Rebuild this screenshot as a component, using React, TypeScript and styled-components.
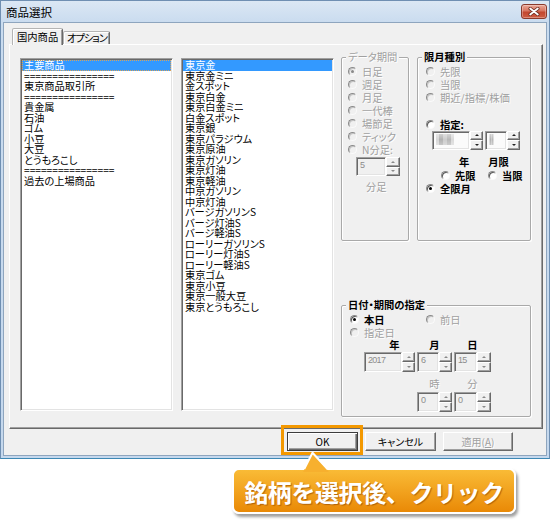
import React from "react";
import styled, { createGlobalStyle } from "styled-components";

const FONT = `"Noto Sans CJK JP", "Noto Sans", sans-serif`;

const GlobalStyle = createGlobalStyle`
  html, body { margin: 0; padding: 0; background: #ffffff; }
  body {
    width: 550px; height: 525px; overflow: hidden;
    font-family: ${FONT};
    font-feature-settings: "palt";
  }
  *, *::before, *::after { box-sizing: border-box; }
`;

const Page = styled.div`
  width: 550px;
  height: 525px;
  background: #fff;
  display: flex;
  flex-direction: column;
`;

/* ---------- window frame ---------- */

const Window = styled.div`
  width: 550px;
  height: 459px;
  display: flex;
  flex-direction: column;
  padding: 0 2px 2px 2px;
  border: 1px solid #6f8fb2;
  border-bottom-color: #3d88b4;
  background: linear-gradient(#dbe7f4, #cadcef 21px, #c5d8ed);
`;

const TitleBar = styled.div`
  height: 21px;
  flex: none;
  display: flex;
  align-items: center;
  justify-content: space-between;
  padding: 0 0 0 3px;
`;

const Title = styled.span`
  font-size: 11.5px;
  line-height: 14px;
  color: #000;
`;

const CloseButton = styled.div`
  width: 26px;
  height: 15px;
  border-radius: 3px;
  border: 1px solid #8a3a2c;
  background: linear-gradient(#eaa898, #d77560 45%, #c3472f 55%, #cf5d43);
  box-shadow: inset 0 0 0 1px rgba(255, 255, 255, 0.3);
  display: flex;
  align-items: center;
  justify-content: center;
`;

const Client = styled.div`
  flex: 1;
  display: flex;
  flex-direction: column;
  background: #f0f0f0;
  border: 1px solid #8ea5be;
`;

/* ---------- tabs ---------- */

const TabStrip = styled.div`
  height: 21px;
  flex: none;
  display: flex;
  align-items: flex-end;
  padding-left: 8px;
  position: relative;
  z-index: 1;
`;

const Tab = styled.div<{ $active?: boolean; $w: number; $tight?: boolean }>`
  width: ${(p) => p.$w}px;
  height: ${(p) => (p.$active ? 17 : 13)}px;
  margin-bottom: ${(p) => (p.$active ? -1 : 0)}px;
  background: #f0f0f0;
  border: 1px solid;
  border-bottom: none;
  border-color: #b4b4b4 #696969 transparent #b4b4b4;
  box-shadow: inset 1px 1px 0 #ffffff, inset -1px 0 0 #a0a0a0;
  border-radius: 2px 2px 0 0;
  font-size: 10.3px;
  line-height: ${(p) => (p.$active ? 15 : 12)}px;
  padding-left: ${(p) => (p.$active ? 4 : 3)}px;
  letter-spacing: ${(p) => (p.$tight ? -1.1 : 0)}px;
  white-space: nowrap;
  color: #000;
`;

const TabPanel = styled.div`
  margin-left: 5px;
  width: 534px;
  height: 385px;
  flex: none;
  border: 1px solid;
  border-color: #ffffff #696969 #696969 #ffffff;
  box-shadow: inset -1px -1px 0 #a0a0a0;
  padding: 13px 0 0 10px;
  display: grid;
  grid-template-columns: 153px 153px 190px;
  column-gap: 8px;
  align-items: start;
`;

/* ---------- list boxes ---------- */

const ListBox = styled.div`
  height: 353px;
  background: #ffffff;
  border: 1px solid;
  border-color: #a0a0a0 #ffffff #ffffff #a0a0a0;
  box-shadow: inset 1px 1px 0 #696969, inset -1px -1px 0 #e3e3e3;
  padding: 1px;
  display: flex;
  flex-direction: column;
  overflow: hidden;
`;

const ListItem = styled.div<{ $selected?: boolean; $focused?: boolean }>`
  flex: none;
  height: 10.5px;
  line-height: 10.5px;
  font-size: 10.2px;
  padding-left: 2px;
  white-space: nowrap;
  color: ${(p) => (p.$selected ? "#ffffff" : "#000000")};
  background: ${(p) => (p.$selected ? "#3399ff" : "transparent")};
  outline: ${(p) => (p.$focused ? "1px dotted #d9a35a" : "none")};
  outline-offset: -1px;
`;

/* ---------- group boxes ---------- */

const RightColumn = styled.div`
  display: flex;
  flex-direction: column;
  margin-top: -7px;
  margin-left: -1px;
`;

const GroupRow = styled.div`
  display: flex;
  gap: 8px;
`;

const Group = styled.fieldset<{ $w: number; $h: number; $mt?: number }>`
  margin: ${(p) => p.$mt ?? 0}px 0 0 0;
  padding: 2px 0 0 0;
  min-inline-size: 0;
  width: ${(p) => p.$w}px;
  height: ${(p) => p.$h}px;
  border: 1px solid #a9a9a9;
  border-radius: 2px;
  box-shadow: inset 1px 1px 0 #ffffff, 1px 1px 0 #ffffff;
  display: flex;
  flex-direction: column;
`;

const Legend = styled.legend<{ $disabled?: boolean }>`
  margin-left: 4px;
  padding: 0 2px;
  font-size: 10.3px;
  line-height: 12px;
  background: #f0f0f0;
  white-space: nowrap;
  color: ${(p) => (p.$disabled ? "#a0a0a0" : "#000000")};
  font-weight: ${(p) => (p.$disabled ? 400 : 700)};
  text-shadow: ${(p) => (p.$disabled ? "1px 1px 0 #ffffff" : "none")};
`;

const Option = styled.div<{ $indent?: number; $mt?: number }>`
  flex: none;
  display: flex;
  align-items: center;
  height: 13px;
  padding-left: ${(p) => p.$indent ?? 0}px;
  margin-top: ${(p) => p.$mt ?? 0}px;
`;

const OptionItem = styled.span<{ $w?: number }>`
  flex: none;
  display: inline-flex;
  align-items: center;
  gap: 5px;
  width: ${(p) => (p.$w ? `${p.$w}px` : "auto")};
`;

const RadioDot = styled.span<{ $checked?: boolean; $disabled?: boolean }>`
  flex: none;
  position: relative;
  width: 9px;
  height: 9px;
  border-radius: 50%;
  border: 1px solid;
  border-color: #8a8a8a #fafafa #fafafa #8a8a8a;
  background: ${(p) => (p.$disabled ? "#f0f0f0" : "#ffffff")};
  box-shadow: inset 1px 1px 0 ${(p) => (p.$disabled ? "#c4c4c4" : "#5a5a5a")};
  &::after {
    content: "";
    display: ${(p) => (p.$checked ? "block" : "none")};
    position: absolute;
    left: 2px;
    top: 2px;
    width: 3px;
    height: 3px;
    border-radius: 50%;
    background: ${(p) => (p.$disabled ? "#8a8a8a" : "#000000")};
  }
`;

const OptText = styled.span<{ $disabled?: boolean }>`
  font-size: 10.3px;
  line-height: 13px;
  white-space: nowrap;
  color: ${(p) => (p.$disabled ? "#a0a0a0" : "#000000")};
  font-weight: ${(p) => (p.$disabled ? 400 : 700)};
  text-shadow: ${(p) => (p.$disabled ? "1px 1px 0 #ffffff" : "none")};
`;

const CaptionRow = styled.div<{ $indent: number; $mt: number; $h: number }>`
  flex: none;
  display: flex;
  gap: 2px;
  align-items: center;
  height: ${(p) => p.$h}px;
  padding-left: ${(p) => p.$indent}px;
  margin-top: ${(p) => p.$mt}px;
`;

const Caption = styled.span<{ $w?: number; $disabled?: boolean; $shift?: number; $ml?: number }>`
  flex: none;
  width: ${(p) => (p.$w ? `${p.$w}px` : "auto")};
  text-align: ${(p) => (p.$w ? "center" : "left")};
  padding-left: ${(p) => p.$shift ?? 0}px;
  margin-left: ${(p) => p.$ml ?? 0}px;
  font-size: 10.3px;
  line-height: 12px;
  white-space: nowrap;
  color: ${(p) => (p.$disabled ? "#a0a0a0" : "#000000")};
  font-weight: ${(p) => (p.$disabled ? 400 : 700)};
  text-shadow: ${(p) => (p.$disabled ? "1px 1px 0 #ffffff" : "none")};
`;

/* ---------- spin boxes ---------- */

const SpinRow = styled.div<{ $indent: number; $mt: number }>`
  flex: none;
  display: flex;
  gap: 2px;
  padding-left: ${(p) => p.$indent}px;
  margin-top: ${(p) => p.$mt}px;
`;

const SpinWrap = styled.div`
  display: flex;
`;

const SpinField = styled.div<{ $w: number; $h: number; $white?: boolean }>`
  position: relative;
  width: ${(p) => p.$w}px;
  height: ${(p) => p.$h}px;
  border: 1px solid;
  border-color: #a0a0a0 #ffffff #ffffff #a0a0a0;
  box-shadow: inset 1px 1px 0 #696969, inset -1px -1px 0 #e3e3e3;
  background: ${(p) => (p.$white ? "#fbfbfb" : "#f0f0f0")};
  padding: 2px 0 0 3px;
  font-family: "Liberation Sans", Arial, sans-serif;
  font-size: 9px;
  line-height: 10px;
  letter-spacing: -0.7px;
  color: #8c8c8c;
`;

const Mosaic = styled.div<{ $w: number }>`
  width: ${(p) => p.$w}px;
  height: 11px;
  background:
    linear-gradient(180deg, rgba(255, 255, 255, 0.45), rgba(255, 255, 255, 0.1) 50%, rgba(255, 255, 255, 0.35)),
    linear-gradient(90deg, #d2d2d2 0 18%, #a9a9a9 18% 40%, #c6c6c6 40% 62%, #b0b0b0 62% 82%, #d6d6d6 82%);
  filter: blur(0.6px);
`;

const SpinButtons = styled.div<{ $w: number; $h: number }>`
  width: ${(p) => p.$w}px;
  height: ${(p) => p.$h}px;
  display: flex;
  flex-direction: column;
`;

const SpinBtn = styled.div<{ $up?: boolean; $disabled?: boolean }>`
  flex: 1;
  background: #f0f0f0;
  border: 1px solid;
  border-color: #ffffff #696969 #696969 #ffffff;
  box-shadow: inset -1px -1px 0 #a0a0a0;
  display: flex;
  align-items: center;
  justify-content: center;
  &::after {
    content: "";
    width: 0;
    height: 0;
    border-left: 2px solid transparent;
    border-right: 2px solid transparent;
    ${(p) =>
      p.$up
        ? `border-bottom: 2px solid ${p.$disabled ? "#8a8a8a" : "#222"};`
        : `border-top: 2px solid ${p.$disabled ? "#8a8a8a" : "#222"};`}
  }
`;

type SpinProps = {
  box: number;
  btn: number;
  h: number;
  value?: string;
  disabled?: boolean;
  white?: boolean;
  mosaic?: number;
};

function Spin({ box, btn, h, value, disabled, white, mosaic }: SpinProps) {
  return (
    <SpinWrap>
      <SpinField $w={box} $h={h} $white={white}>
        {value}
        {mosaic ? <Mosaic $w={mosaic} /> : null}
      </SpinField>
      <SpinButtons $w={btn} $h={h}>
        <SpinBtn $up $disabled={disabled} />
        <SpinBtn $disabled={disabled} />
      </SpinButtons>
    </SpinWrap>
  );
}

function Radio({
  label,
  checked,
  disabled,
  w,
}: {
  label: string;
  checked?: boolean;
  disabled?: boolean;
  w?: number;
}) {
  return (
    <OptionItem $w={w}>
      <RadioDot $checked={checked} $disabled={disabled} />
      <OptText $disabled={disabled}>{label}</OptText>
    </OptionItem>
  );
}

/* ---------- buttons ---------- */

const ButtonRow = styled.div`
  flex: none;
  display: flex;
  justify-content: flex-end;
  gap: 7px;
  padding-right: 33px;
  margin-top: 3px;
`;

const ButtonSlot = styled.div`
  position: relative;
  display: flex;
`;

const DialogButton = styled.button<{ $w: number; $default?: boolean; $disabled?: boolean }>`
  width: ${(p) => p.$w}px;
  height: 19px;
  padding: 0;
  font-family: ${FONT};
  font-feature-settings: "palt";
  font-size: 10px;
  font-weight: 400;
  line-height: 17px;
  color: ${(p) => (p.$disabled ? "#a0a0a0" : "#000000")};
  text-shadow: ${(p) => (p.$disabled ? "1px 1px 0 #ffffff" : "none")};
  background: #f0f0f0;
  border: 1px solid;
  border-color: ${(p) => (p.$default ? "#3c3c3c" : "#ffffff #696969 #696969 #ffffff")};
  box-shadow: ${(p) =>
    p.$default
      ? "inset 1px 1px 0 #ffffff, inset -1px -1px 0 #696969, inset -2px -2px 0 #a0a0a0"
      : "inset -1px -1px 0 #a0a0a0"};
  u { text-decoration: underline; }
`;

const Highlight = styled.div`
  position: absolute;
  left: -6px;
  top: -7px;
  right: -5px;
  bottom: -4px;
  border: 3px solid #f39800;
  pointer-events: none;
`;

/* ---------- callout ---------- */

const CalloutRow = styled.div`
  padding-left: 232px;
  margin-top: 9px;
`;

const Callout = styled.div`
  position: relative;
  width: 284px;
  height: 46px;
  border: 2px solid #ffffff;
  border-radius: 7px;
  background: linear-gradient(#f9bb36, #f1a01c 55%, #e98906);
  box-shadow: 2px 3px 3px rgba(0, 0, 0, 0.38);
  display: flex;
  align-items: center;
  justify-content: center;
  color: #ffffff;
  font-weight: 700;
  font-size: 24px;
  letter-spacing: -0.4px;
  font-feature-settings: normal;
  text-shadow: 1px 1px 1px rgba(140, 65, 0, 0.6);
`;

const Pointer = styled.svg`
  position: absolute;
  left: 69px;
  top: -18px;
  overflow: visible;
`;

/* ---------- data ---------- */

const LEFT_ITEMS = [
  "主要商品",
  "================",
  "東京商品取引所",
  "================",
  "貴金属",
  "石油",
  "ゴム",
  "小豆",
  "大豆",
  "とうもろこし",
  "================",
  "過去の上場商品",
];

const MID_ITEMS = [
  "東京金",
  "東京金ミニ",
  "金スポット",
  "東京白金",
  "東京白金ミニ",
  "白金スポット",
  "東京銀",
  "東京パラジウム",
  "東京原油",
  "東京ガソリン",
  "東京灯油",
  "東京軽油",
  "中京ガソリン",
  "中京灯油",
  "バージガソリンS",
  "バージ灯油S",
  "バージ軽油S",
  "ローリーガソリンS",
  "ローリー灯油S",
  "ローリー軽油S",
  "東京ゴム",
  "東京小豆",
  "東京一般大豆",
  "東京とうもろこし",
];

const PERIODS = ["日足", "週足", "月足", "一代棒", "場節足", "ティック", "N分足:"];

export default function App() {
  return (
    <Page>
      <GlobalStyle />
      <Window>
        <TitleBar>
          <Title>商品選択</Title>
          <CloseButton>
            <svg width="12" height="9" viewBox="0 0 12 9">
              <path d="M2.2 1.6 L9.8 7.4 M9.8 1.6 L2.2 7.4" stroke="#6b2a1e" strokeWidth="3.4" strokeLinecap="round" />
              <path d="M2.2 1.6 L9.8 7.4 M9.8 1.6 L2.2 7.4" stroke="#ffffff" strokeWidth="1.9" strokeLinecap="round" />
            </svg>
          </CloseButton>
        </TitleBar>
        <Client>
          <TabStrip>
            <Tab $active $w={51}>国内商品</Tab>
            <Tab $w={47} $tight>オプション</Tab>
          </TabStrip>
          <TabPanel>
            <ListBox>
              {LEFT_ITEMS.map((t, i) => (
                <ListItem key={i} $selected={i === 0} $focused={i === 0}>
                  {t}
                </ListItem>
              ))}
            </ListBox>
            <ListBox>
              {MID_ITEMS.map((t, i) => (
                <ListItem key={i} $selected={i === 0}>
                  {t}
                </ListItem>
              ))}
            </ListBox>
            <RightColumn>
              <GroupRow>
                <Group $w={68} $h={190}>
                  <Legend $disabled>データ期間</Legend>
                  {PERIODS.map((p, i) => (
                    <Option key={p} $indent={6}>
                      <Radio label={p} checked={i === 0} disabled />
                    </Option>
                  ))}
                  <SpinRow $indent={14} $mt={1}>
                    <Spin box={30} btn={14} h={19} value="5" disabled />
                  </SpinRow>
                  <CaptionRow $indent={24} $mt={5} $h={12}>
                    <Caption $disabled>分足</Caption>
                  </CaptionRow>
                </Group>
                <Group $w={114} $h={190}>
                  <Legend>限月種別</Legend>
                  <Option $indent={8}>
                    <Radio label="先限" disabled />
                  </Option>
                  <Option $indent={8}>
                    <Radio label="当限" disabled />
                  </Option>
                  <Option $indent={8}>
                    <Radio label="期近/指標/株価" disabled />
                  </Option>
                  <Option $indent={8} $mt={13.5}>
                    <Radio label="指定:" />
                  </Option>
                  <SpinRow $indent={14} $mt={0}>
                    <Spin box={38} btn={13} h={19} white mosaic={18} />
                    <Spin box={22} btn={13} h={19} white mosaic={5} />
                  </SpinRow>
                  <CaptionRow $indent={41} $mt={6} $h={12}>
                    <Caption>年</Caption>
                    <Caption $ml={17}>月限</Caption>
                  </CaptionRow>
                  <Option $indent={23} $mt={1.5}>
                    <Radio label="先限" w={47} />
                    <Radio label="当限" />
                  </Option>
                  <Option $indent={8}>
                    <Radio label="全限月" checked />
                  </Option>
                </Group>
              </GroupRow>
              <Group $w={190} $h={118} $mt={58}>
                <Legend>日付・期間の指定</Legend>
                <Option $indent={8}>
                  <Radio label="本日" checked w={76} />
                  <Radio label="前日" disabled />
                </Option>
                <Option $indent={8}>
                  <Radio label="指定日" disabled />
                </Option>
                <CaptionRow $indent={22} $mt={0} $h={11}>
                  <Caption $w={51} $shift={10}>年</Caption>
                  <Caption $w={35}>月</Caption>
                  <Caption $w={37}>日</Caption>
                </CaptionRow>
                <SpinRow $indent={22} $mt={2}>
                  <Spin box={38} btn={13} h={20} value="2017" disabled />
                  <Spin box={22} btn={13} h={20} value="6" disabled />
                  <Spin box={23} btn={14} h={20} value="15" disabled />
                </SpinRow>
                <CaptionRow $indent={75} $mt={6} $h={12}>
                  <Caption $w={35} $disabled>時</Caption>
                  <Caption $w={37} $disabled>分</Caption>
                </CaptionRow>
                <SpinRow $indent={75} $mt={2}>
                  <Spin box={22} btn={13} h={20} value="0" disabled />
                  <Spin box={23} btn={14} h={20} value="0" disabled />
                </SpinRow>
              </Group>
            </RightColumn>
          </TabPanel>
          <ButtonRow>
            <ButtonSlot>
              <DialogButton $w={71} $default>OK</DialogButton>
              <Highlight />
            </ButtonSlot>
            <ButtonSlot>
              <DialogButton $w={71}>キャンセル</DialogButton>
            </ButtonSlot>
            <ButtonSlot>
              <DialogButton $w={70} $disabled>
                適用(<u>A</u>)
              </DialogButton>
            </ButtonSlot>
          </ButtonRow>
        </Client>
      </Window>
      <CalloutRow>
        <Callout>
          <Pointer width="26" height="20" viewBox="0 0 26 20">
            <polygon points="0,20 9.5,0 26,20" fill="#f7b02e" />
            <polyline points="1.2,17 9.5,0.8 24.5,17" fill="none" stroke="#ffffff" strokeWidth="2" strokeLinejoin="round" />
          </Pointer>
          銘柄を選択後、クリック
        </Callout>
      </CalloutRow>
    </Page>
  );
}
